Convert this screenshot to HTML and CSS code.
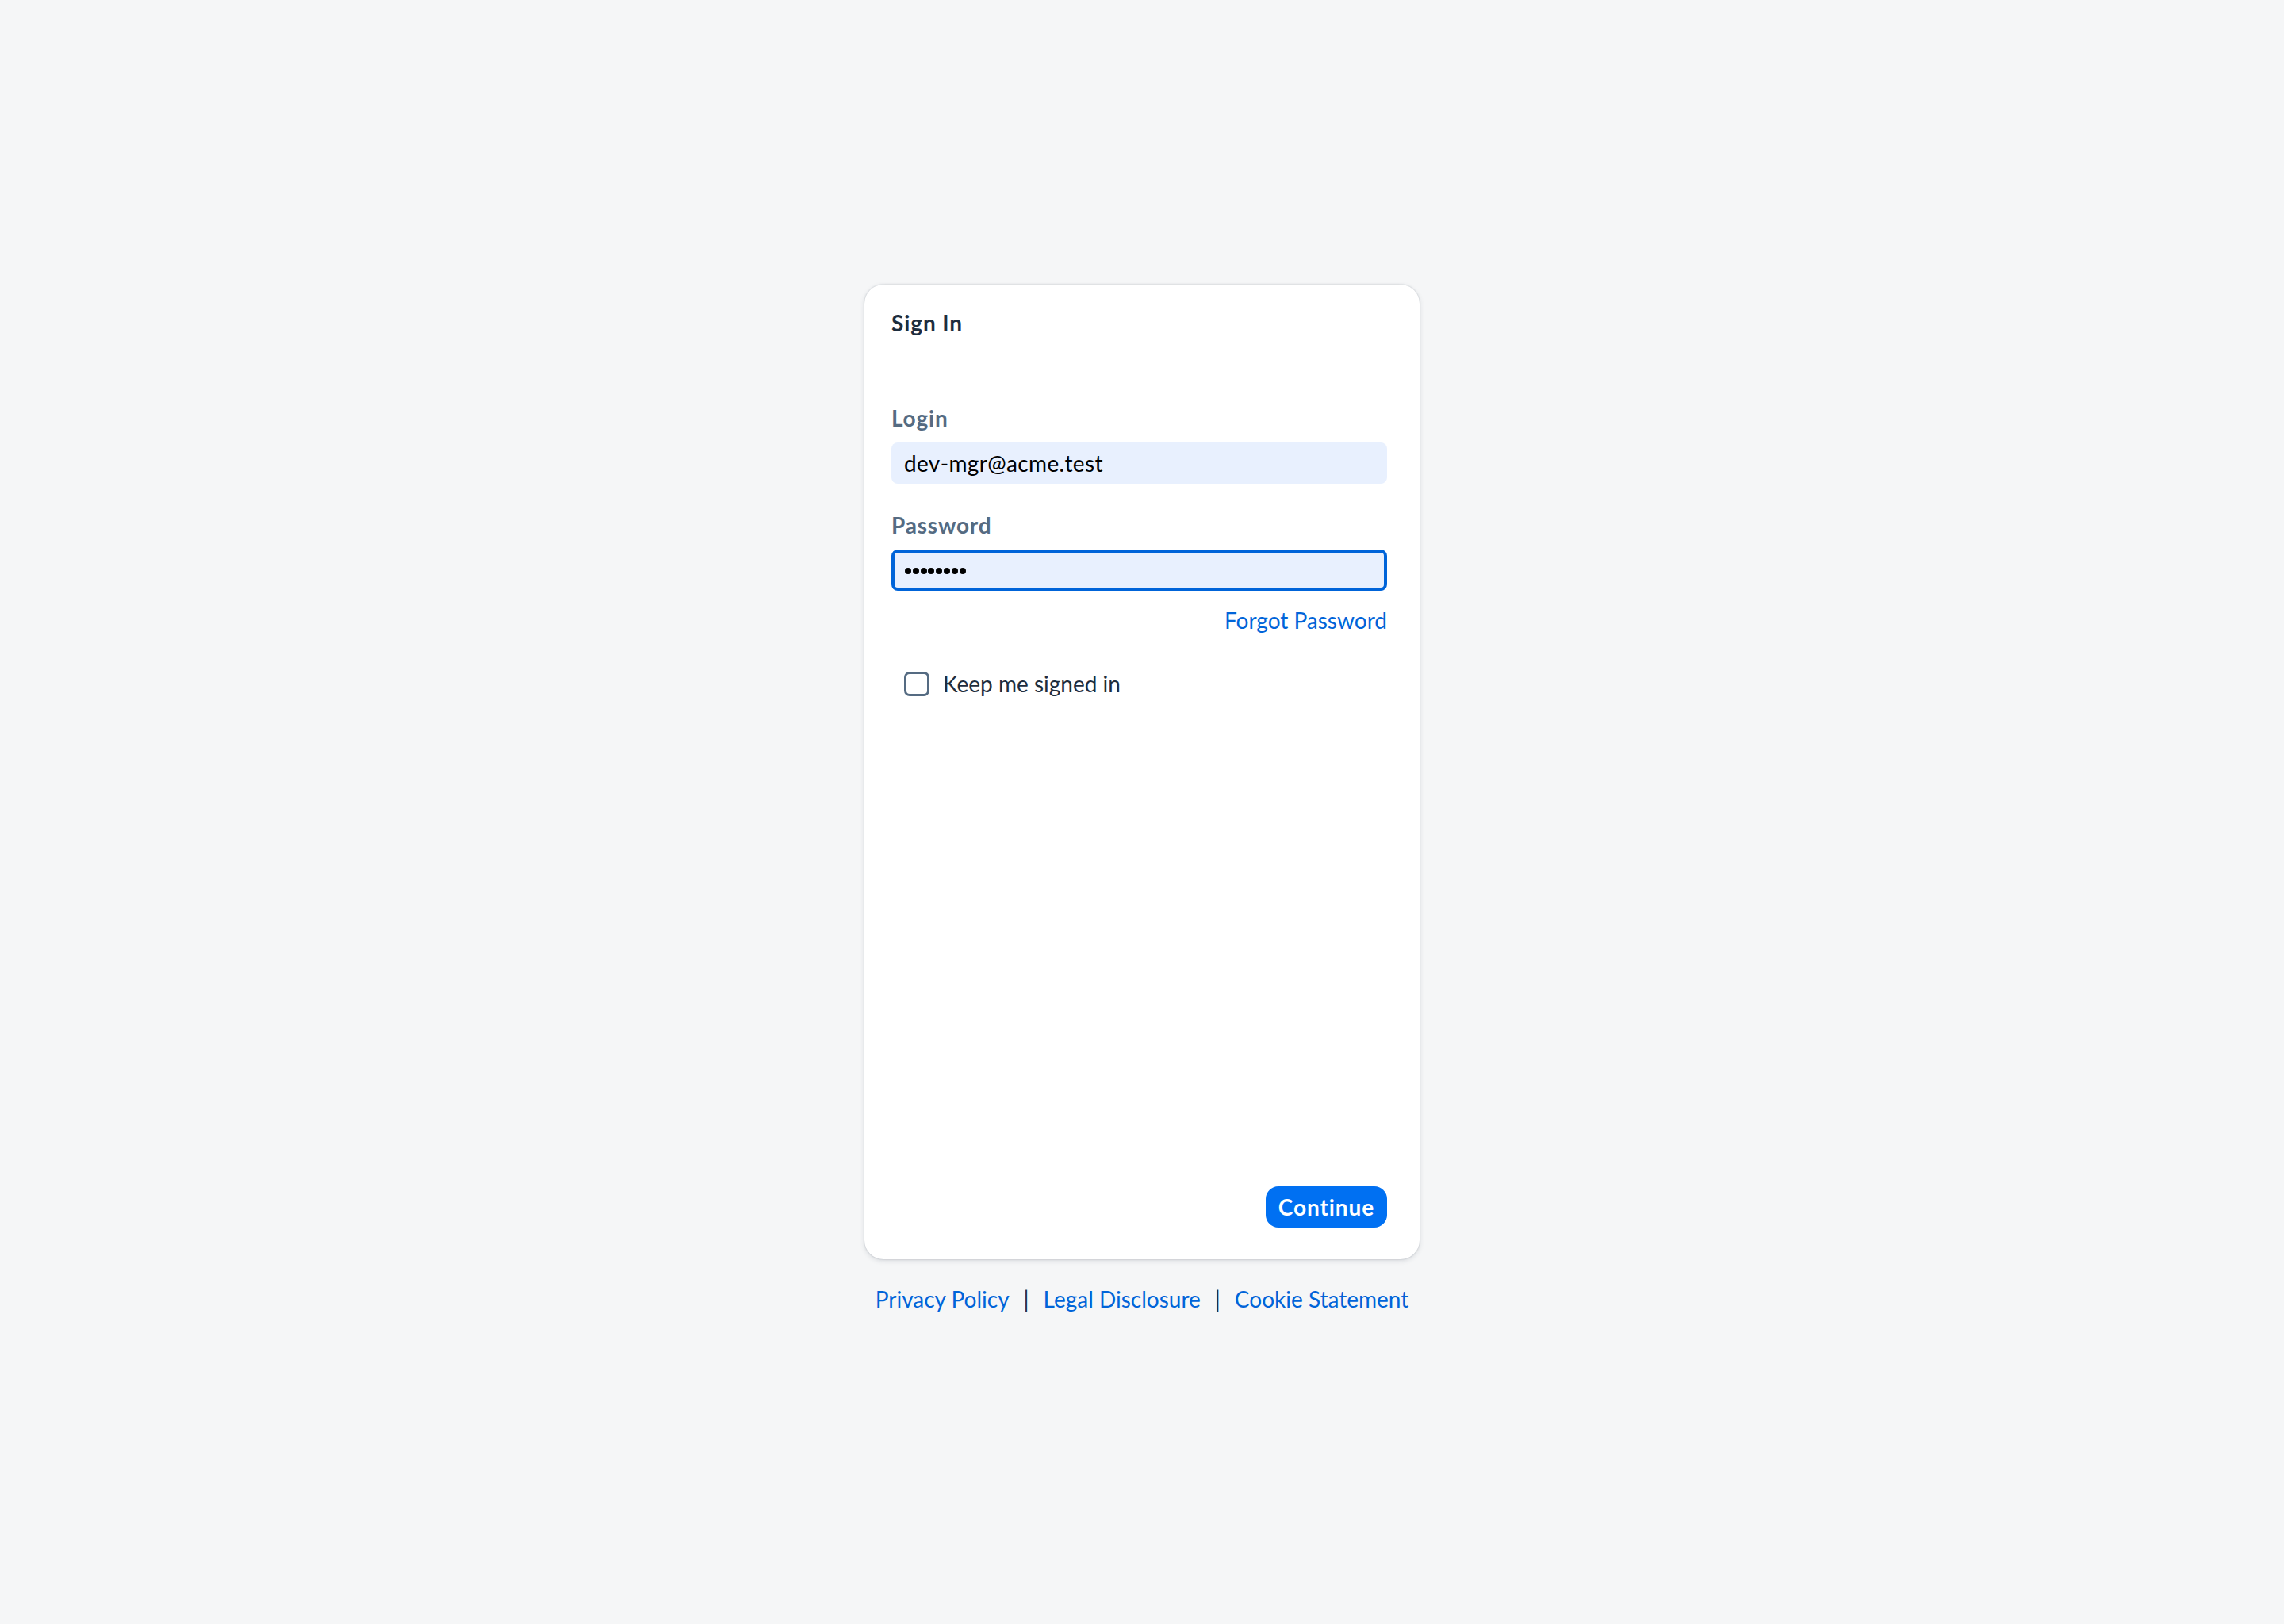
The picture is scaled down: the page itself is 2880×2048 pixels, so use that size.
FILE: index.html
```html
<!DOCTYPE html>
<html lang="en">
<head>
<meta charset="utf-8">
<title>Sign In</title>
<link rel="stylesheet" href="styles.css">
</head>
<body>
<main class="page">
  <section class="card">
    <h1 class="title">Sign In</h1>
    <form class="form">
      <label class="label" for="login">Login</label>
      <div class="field" id="login">dev-mgr@acme.test</div>
      <label class="label label-pw" for="pw">Password</label>
      <div class="field field-focus" id="pw" aria-label="password, 8 characters">
        <span class="dots"><i class="dot"></i><i class="dot"></i><i class="dot"></i><i class="dot"></i><i class="dot"></i><i class="dot"></i><i class="dot"></i><i class="dot"></i></span>
      </div>
      <div class="forgot-row"><a class="link" href="#">Forgot Password</a></div>
      <div class="check-row">
        <span class="checkbox"></span>
        <span class="check-label">Keep me signed in</span>
      </div>
    </form>
    <div class="actions">
      <button class="btn" type="button">Continue</button>
    </div>
  </section>
  <footer class="footer">
    <a class="link" href="#">Privacy Policy</a>
    <span class="sep">|</span>
    <a class="link" href="#">Legal Disclosure</a>
    <span class="sep">|</span>
    <a class="link" href="#">Cookie Statement</a>
  </footer>
</main>
</body>
</html>
```
FILE: styles.css
```css
html, body {
  margin: 0;
  padding: 0;
  background: #f5f6f7;
  font-family: Lato, "Liberation Sans", sans-serif;
  color: #1d2d3e;
}

.page {
  display: flex;
  flex-direction: column;
  align-items: center;
  padding-top: 359px;
  min-height: 2048px;
  box-sizing: border-box;
}

.card {
  width: 700px;
  height: 1229px;
  box-sizing: border-box;
  background: #ffffff;
  border-radius: 24px;
  box-shadow: 0 0 2px rgba(34, 53, 72, 0.25), 0 2px 6px rgba(34, 53, 72, 0.14);
  padding: 30px 41px 40px 34px;
  display: flex;
  flex-direction: column;
}

.title {
  margin: 0;
  font-size: 28px;
  line-height: 36px;
  font-weight: 700;
  letter-spacing: 0.9px;
  color: #1d2d3e;
}

.form {
  display: flex;
  flex-direction: column;
  margin-top: 84px;
}

.label {
  font-size: 28px;
  line-height: 36px;
  font-weight: 700;
  letter-spacing: 0.8px;
  color: #556b82;
  margin-bottom: 13px;
}

.label-pw {
  margin-top: 34px;
}

.field {
  height: 52px;
  box-sizing: border-box;
  background: #e8f0fe;
  border-radius: 8px;
  padding: 0 16px;
  display: flex;
  align-items: center;
  font-size: 28px;
  letter-spacing: 0.35px;
  color: #000000;
}

.field-focus {
  border: 4px solid #0064d9;
  padding: 0 12px 0 13px;
  border-radius: 8px;
}

.dots {
  display: flex;
  gap: 1.8px;
  margin-top: 1px;
}

.dot {
  display: block;
  width: 8px;
  height: 8px;
  border-radius: 50%;
  background: #000000;
}

.forgot-row {
  display: flex;
  justify-content: flex-end;
  margin-top: 19px;
  font-size: 28px;
  line-height: 36px;
}

.link {
  color: #0064d9;
  text-decoration: none;
}

.check-row {
  display: flex;
  align-items: center;
  gap: 17px;
  margin-top: 44px;
  padding-left: 16px;
  height: 36px;
}

.checkbox {
  width: 32px;
  height: 31px;
  box-sizing: border-box;
  border: 3px solid #556b82;
  border-radius: 7px;
  background: #ffffff;
}

.check-label {
  font-size: 28px;
  line-height: 36px;
  color: #1d2d3e;
}

.actions {
  margin-top: auto;
  display: flex;
  justify-content: flex-end;
}

.btn {
  height: 52px;
  padding: 0 16px;
  border: none;
  border-radius: 16px;
  background: #0070f2;
  color: #ffffff;
  font-family: Lato, "Liberation Sans", sans-serif;
  font-size: 28px;
  font-weight: 700;
  letter-spacing: 0.9px;
}

.footer {
  display: flex;
  align-items: center;
  margin-top: 32px;
  font-size: 28px;
  line-height: 36px;
}

.sep {
  color: #1d2d3e;
  margin: 0 18px;
}
```
